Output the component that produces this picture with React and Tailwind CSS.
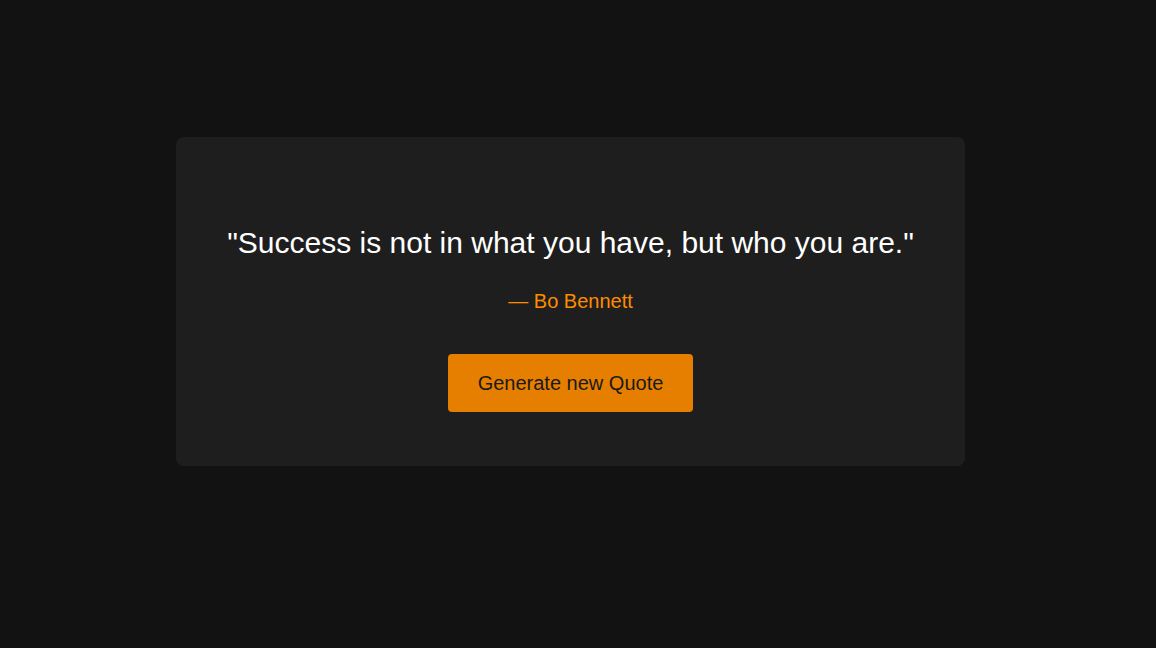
export default function App() {
  return (
    <div className="min-h-screen bg-[#121212] pt-[137px] pl-[176px]" style={{ fontFamily: '"Liberation Sans", Arial, sans-serif' }}>
      <div className="w-[789px] h-[329px] rounded-lg bg-[#1e1e1e] flex flex-col items-center pt-[89px]">
        <p className="text-[30px] leading-[34px] text-white">
          "Success is not in what you have, but who you are."
        </p>
        <p className="mt-[29px] text-[20px] leading-[24px] text-[#ff8c00]">— Bo Bennett</p>
        <button className="mt-[41px] bg-[#e67e00] text-[#1a1a1a] text-[20px] leading-[24px] px-[30px] py-[17px] rounded">
          Generate new Quote
        </button>
      </div>
    </div>
  );
}
